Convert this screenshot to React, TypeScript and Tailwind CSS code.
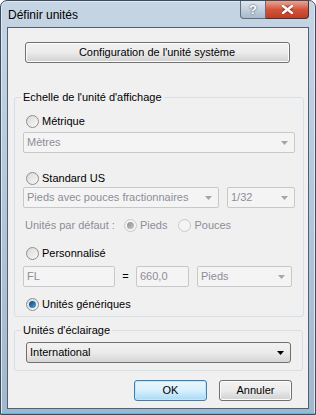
import type { ReactNode } from 'react';

const font = { fontFamily: '"Liberation Sans", Arial, sans-serif' };

function Radio({ checked = false, disabled = false }: { checked?: boolean; disabled?: boolean }) {
  return (
    <span
      className={`flex h-[13px] w-[13px] shrink-0 items-center justify-center rounded-full border ${
        disabled ? 'border-[#c9c9c9] bg-[#f4f4f4]' : 'border-[#8e8f8f] bg-gradient-to-br from-[#d9d9d9] to-[#f8f8f8]'
      }`}
    >
      {checked && (
        <span
          className={`h-[7px] w-[7px] rounded-full ${
            disabled
              ? 'bg-gradient-to-br from-[#8c8c8c] to-[#c8c8c8]'
              : 'bg-gradient-to-br from-[#0c3f78] to-[#4aa8e6]'
          }`}
        />
      )}
    </span>
  );
}

function RadioRow({
  label,
  checked,
  disabled,
  className = '',
}: {
  label: string;
  checked?: boolean;
  disabled?: boolean;
  className?: string;
}) {
  return (
    <div className={`flex h-[16px] items-center gap-[3px] whitespace-nowrap ${className}`}>
      <Radio checked={checked} disabled={disabled} />
      <span className={disabled ? 'text-[#8d8d98]' : 'text-black'}>{label}</span>
    </div>
  );
}

function Select({ value, width, disabled = true }: { value: string; width: string; disabled?: boolean }) {
  if (!disabled) {
    return (
      <div
        className={`flex h-[21px] ${width} items-center justify-between whitespace-nowrap rounded-[3px] border border-[#707070] bg-gradient-to-b from-[#f2f2f2] via-[#ebebeb] to-[#d6d6d6] pl-[3px] pr-[6px]`}
      >
        <span>{value}</span>
        <svg width="7" height="4" viewBox="0 0 7 4">
          <path d="M0 0h7L3.5 4z" fill="#000" />
        </svg>
      </div>
    );
  }
  return (
    <div
      className={`flex h-[21px] ${width} items-center justify-between whitespace-nowrap rounded-[2px] border border-[#c8c8c8] bg-[#f4f4f4] pl-[3px] pr-[6px]`}
    >
      <span className="text-[#8d8d98]">{value}</span>
      <svg width="7" height="4" viewBox="0 0 7 4">
        <path d="M0 0h7L3.5 4z" fill="#a6a6a6" />
      </svg>
    </div>
  );
}

function Input({ value, width }: { value: string; width: string }) {
  return (
    <div className={`flex h-[21px] ${width} items-center rounded-[2px] border border-[#c8c8c8] bg-[#f4f4f4] pl-[3px]`}>
      <span className="text-[#8d8d98]">{value}</span>
    </div>
  );
}

function Button({ children, width, primary = false }: { children: ReactNode; width: string; primary?: boolean }) {
  return (
    <button
      className={`flex h-[21px] ${width} items-center justify-center whitespace-nowrap rounded-[3px] border ${
        primary
          ? 'border-[#3c7fb1] bg-gradient-to-b from-[#eaf6fd] via-[#d9f0fc] to-[#a7d9f5] shadow-[inset_0_0_0_1px_#bfe6fb]'
          : 'border-[#707070] bg-gradient-to-b from-[#f2f2f2] via-[#ebebeb] to-[#d0d0d0] shadow-[inset_0_0_0_1px_#fcfcfc]'
      }`}
    >
      {children}
    </button>
  );
}

export default function App() {
  return (
    <div className="h-[415px] w-[316px] overflow-hidden bg-white text-[11px]" style={font}>
      <div className="flex h-[415px] w-[316px] flex-col rounded-t-[7px] border border-[#3b4d60] bg-gradient-to-b from-[#c6d5e4] via-[#b4c6d9] to-[#a3b7cc] shadow-[inset_0_0_0_1px_#dfe8f1]">
        <div className="flex h-[26px] items-start justify-between">
          <span className="mt-[5px] pl-[7px] text-[12px] text-black">Définir unités</span>
          <div className="mr-[6px] flex">
            <div className="flex h-[18px] w-[26px] items-center justify-center rounded-bl-[4px] border border-t-0 border-[#5d6e80] bg-gradient-to-b from-[#dfe6ee] via-[#c3cfdc] to-[#a9b9ca]">
              <span className="text-[13px] font-bold leading-none text-white [text-shadow:0_0_2px_#27323e]">?</span>
            </div>
            <div className="flex h-[18px] w-[43px] items-center justify-center rounded-br-[4px] border border-l-0 border-t-0 border-[#5c2a22] bg-gradient-to-b from-[#e8a493] via-[#d0553d] to-[#c23c22]">
              <svg width="11" height="9" viewBox="0 0 11 9">
                <path
                  d="M1 1l9 7M10 1L1 8"
                  stroke="#fff"
                  strokeWidth="2.4"
                  strokeLinecap="square"
                  style={{ filter: 'drop-shadow(0 0 1px #5a1a10)' }}
                />
              </svg>
            </div>
          </div>
        </div>

        <div className="mx-[6px] flex h-[382px] flex-col border border-[#4e6073] bg-[#f0f0f0] text-black">
          <div className="mt-[14px] flex justify-center pr-[2px]">
            <Button width="w-[265px]">Configuration de l'unité système</Button>
          </div>

          <fieldset className="mx-[6px] mr-[5px] mt-[26px] rounded-[3px] border border-[#d5dfe5] px-[8px] pb-[4px]">
            <legend className="ml-[-2px] h-[16px] whitespace-nowrap px-[2px] leading-[16px]">Echelle de l'unité d'affichage</legend>
            <RadioRow label="Métrique" className="mt-[8px] ml-[3px]" />
            <div className="mt-[3px]">
              <Select value="Mètres" width="w-full" />
            </div>
            <RadioRow label="Standard US" className="mt-[17px] ml-[3px]" />
            <div className="mt-[1px] flex gap-[8px]">
              <Select value="Pieds avec pouces fractionnaires" width="w-[196px]" />
              <Select value="1/32" width="w-[68px]" />
            </div>
            <div className="mt-[9px] flex h-[16px] items-center whitespace-nowrap text-[#8d8d98]">
              <span className="ml-[2px]">Unités par défaut :</span>
              <RadioRow label="Pieds" checked disabled className="ml-[9px]" />
              <RadioRow label="Pouces" disabled className="ml-[11px]" />
            </div>
            <RadioRow label="Personnalisé" className="mt-[12px] ml-[3px]" />
            <div className="mt-[5px] flex items-center">
              <Input value="FL" width="w-[92px]" />
              <span className="w-[21px] text-center">=</span>
              <Input value="660,0" width="w-[53px]" />
              <div className="ml-[8px]">
                <Select value="Pieds" width="w-[95px]" />
              </div>
            </div>
            <RadioRow label="Unités génériques" checked className="mt-[9px] ml-[3px]" />
          </fieldset>

          <fieldset className="mx-[6px] mr-[5px] mt-[5px] rounded-[3px] border border-[#d5dfe5] px-[11px] pb-[7px]">
            <legend className="ml-[-5px] h-[16px] whitespace-nowrap px-[2px] leading-[16px]">Unités d'éclairage</legend>
            <div className="mt-[4px]">
              <Select value="International" width="w-full" disabled={false} />
            </div>
          </fieldset>

          <div className="mt-[9px] flex justify-end gap-[12px] pr-[16px]">
            <Button width="w-[73px]" primary>
              OK
            </Button>
            <Button width="w-[73px]">Annuler</Button>
          </div>
        </div>
        <div className="mt-auto h-[1px] bg-[#42c3ea]" />
      </div>
    </div>
  );
}
